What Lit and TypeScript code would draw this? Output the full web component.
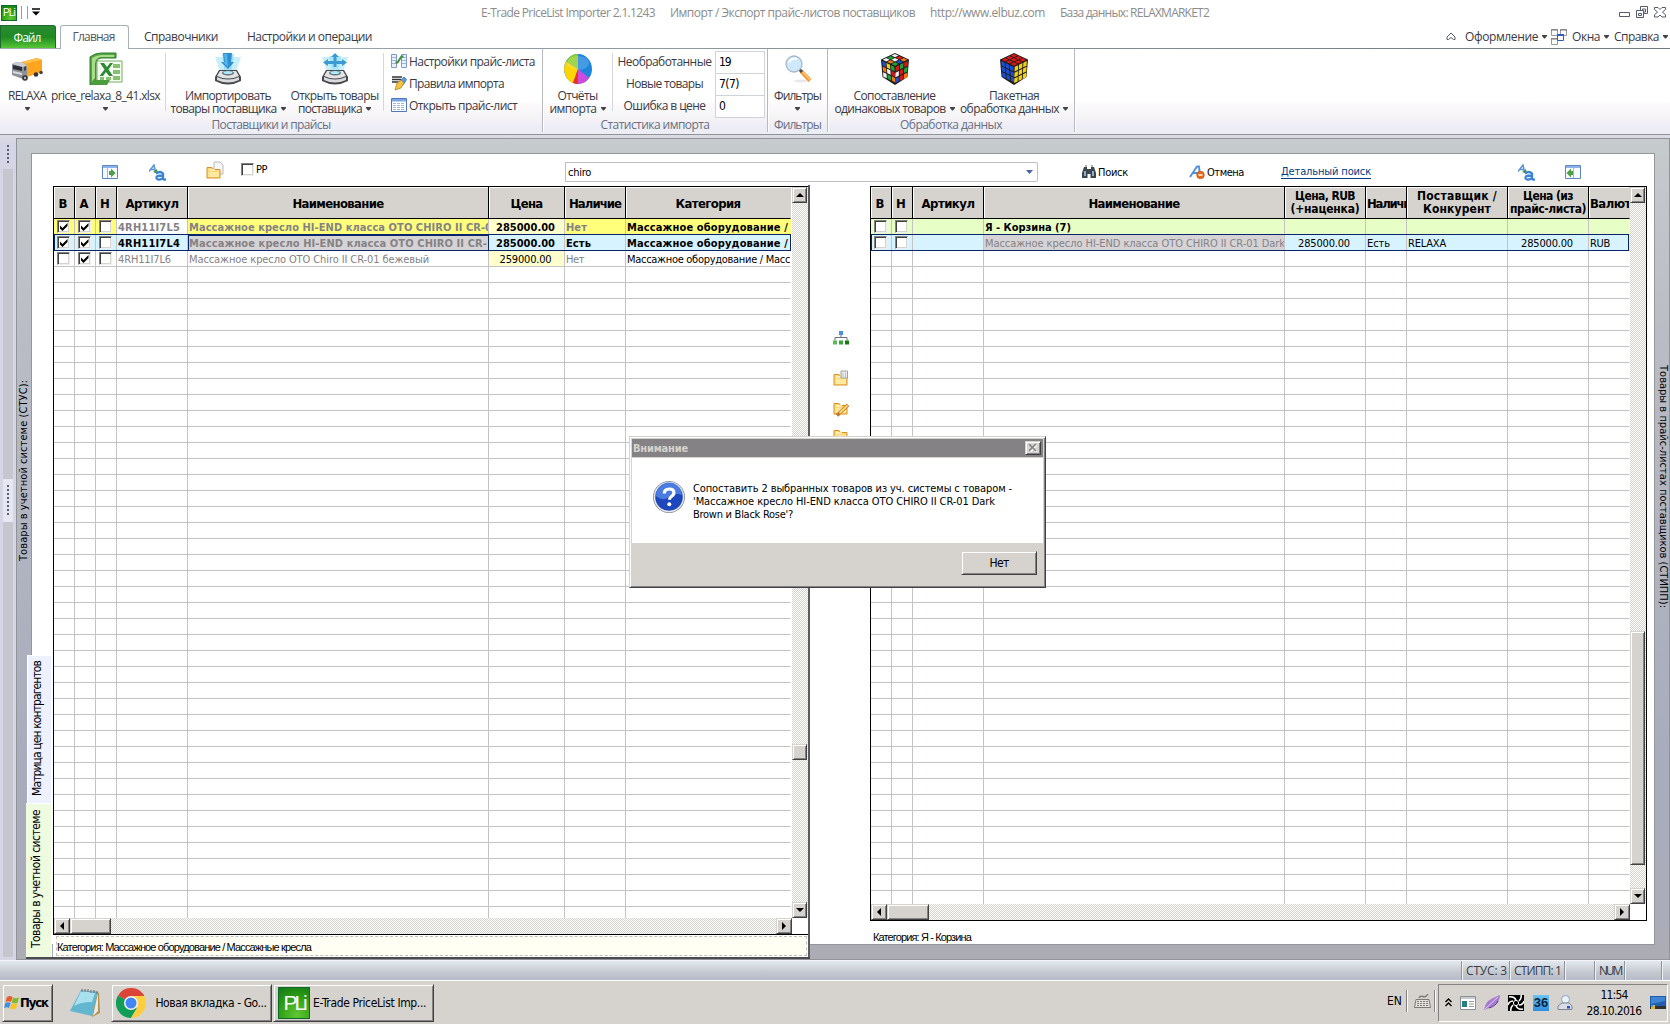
import { LitElement, css, html, svg, nothing } from "lit";
import { customElement, property } from "lit/decorators.js";
import { classMap } from "lit/directives/class-map.js";
import { styleMap } from "lit/directives/style-map.js";

/* A label with a fixed run length, the letter spacing takes up the difference. */
@customElement("fit-text")
export class FitText extends LitElement {
    @property() text = "";
    @property({ type: Number }) w = 0;

    static styles = css`
        :host {
            display: inline-block;
            white-space: pre;
        }
        span {
            display: inline-block;
        }
    `;

    updated() {
        const span = this.shadowRoot!.querySelector("span")!;
        span.style.letterSpacing = "0";
        if (!this.w) return;
        const box = span.getBoundingClientRect();
        const length = Math.max(box.width, box.height);
        span.style.letterSpacing = (this.w - length) / this.text.length + "px";
    }

    render() {
        return html`<span>${this.text}</span>`;
    }
}

const t = (text: string, w = 0, cls = "") => html`<fit-text class=${cls} text=${text} w=${w}></fit-text>`;

const icon = (w: number, h: number, body: unknown, box = `0 0 ${w} ${h}`) =>
    html`<svg class="icon" width=${w} height=${h} viewBox=${box}>${body}</svg>`;

const folder = svg`
    <path d="M1 4.500h5l1.500 2H14v8.500H1z" fill="#fbd978" stroke="#d9902a"/>
    <path d="M2.500 9h10.500v5H2.500z" fill="#ffe9a0"/><path d="M3 7h6" stroke="#fff3c4" stroke-width="1.500"/>`;

const icons = {
    truck: icon(32, 28, svg`
        <path d="M11 7 26 3l5 2v12l-16 5-4-2z" fill="#f08a00"/>
        <path d="M11 7 26 3l5 2-16 4z" fill="#ffc04a"/><path d="M15 9 31 5v12l-16 5z" fill="#ffa51f"/>
        <path d="M1 9l4-2 8 1 3 3v11l-4 2-11-4z" fill="#8d9097"/>
        <path d="M2 10l9 2v4l-9-2z" fill="#2b3038"/><path d="M1 9l4-2 8 1 3 3-4 1z" fill="#c9cdd4"/>
        <path d="M2 16l9 2v2l-9-2z" fill="#d9dce0"/><path d="M13 12l2-1v4l-2 1z" fill="#39424f"/>
        <circle cx="14" cy="23" r="2.800" fill="#333"/><circle cx="14" cy="23" r="1.200" fill="#bbb"/>
        <circle cx="25" cy="19.500" r="2.300" fill="#333"/><circle cx="30" cy="17.500" r="1.800" fill="#444"/>`),
    excel: icon(34, 34, svg`
        <path d="M1 5 Q6 1 12 1H27V6H12Q7 7 7 12V28L1 33z" fill="#58a546" stroke="#2f7a2d"/>
        <path d="M3 6Q8 3 13 3h12v2H12Q6 6 6 12v14l-3 3z" fill="#a9dc86"/>
        <path d="M8 9h25v21H8z" fill="#f6fbf4" stroke="#73b05f"/>
        <path d="M24 12h7v4h-7zM24 18h7v4h-7zM24 24h7v4h-7zM17 25h5v3h-5zM11 25h4v3h-4z" fill="#86c26e"/>
        <path d="M11 11h4l3 4 3-4h3l-4.500 6.500L24 24h-4l-3-4-3 4h-3.500l5-6.500z" fill="#2e8b35"/>
        <path d="M1 33l6-5h14l-3 5z" fill="#4b9c3d"/>`),
    scanDown: icon(28, 34, svg`
        <path d="M1 5 27 5 21 22H7z" fill="#c7eefa"/><path d="M8 2h12l-3 20h-6z" fill="#8fd6f2" opacity=".7"/>
        <path d="M9 1h9l-1 9h3l-6 7-7-7h3z" fill="#2b8fd0"/><path d="M10 2h3l1 13-5-5h2z" fill="#57b4e6"/>
        <path d="M5 18h18l4 7v4q-13 7-26 0v-4z" fill="#45484c"/>
        <path d="M6 19h16l3 5q-11 5-22 0z" fill="#e1e3e5"/><ellipse cx="14" cy="21" rx="6" ry="2.500" fill="#6d7276"/>
        <ellipse cx="14" cy="20.500" rx="4.500" ry="1.500" fill="#a8ecff"/><path d="M3 25q11 5 22 0v3q-11 5-22 0z" fill="#d9dbdd"/>`),
    scanUp: icon(28, 34, svg`
        <path d="M1 5 27 5 21 22H7z" fill="#c7eefa"/><path d="M8 4h12l-3 18h-6z" fill="#a5e0f5" opacity=".8"/>
        <path d="M14 1l4 4h-2.500v4H21V7l5 3.500-5 3.500v-2h-5.500v3h-3v-3H7v2l-5-3.500L7 7v2h5.500V5H10z" fill="#3c9bd3"/>
        <path d="M5 18h18l4 7v4q-13 7-26 0v-4z" fill="#45484c"/>
        <path d="M6 19h16l3 5q-11 5-22 0z" fill="#e1e3e5"/><ellipse cx="14" cy="21" rx="6" ry="2.500" fill="#6d7276"/>
        <ellipse cx="14" cy="20.500" rx="4.500" ry="1.500" fill="#a8ecff"/><path d="M3 25q11 5 22 0v3q-11 5-22 0z" fill="#d9dbdd"/>`),
    listSetup: icon(16, 16, svg`
        <path d="M.5 1.500h5v13h-5zM10.500 1.500h5v13h-5z" fill="#eaf1fb" stroke="#7d9ccb"/>
        <path d="M1 4.500h4M1 7.500h4M1 10.500h4M11 4.500h4M11 7.500h4M11 10.500h4" stroke="#9bb5dc"/>
        <path d="M4.500 9.500h2l4-6h2" fill="none" stroke="#3f8f3a" stroke-width="2"/>`),
    rules: icon(16, 16, svg`
        <path d="M1 2h10M1 4.500h9M1 7h8" stroke="#333" stroke-width="1.300"/>
        <path d="M10 5l3-3 2.500 2.500-3 5z" fill="#5b9be0" stroke="#3568ad" stroke-width=".8"/>
        <path d="M6 8l4-3 3 3-3 5-6 2z" fill="#f5c344" stroke="#b98513" stroke-width=".8"/>`),
    sheet: icon(16, 16, svg`
        <path d="M.5 1.500h15v13H.5z" fill="#fff" stroke="#4c79bd"/><path d="M1 2h14v2.500H1z" fill="#7da6e0"/>
        <path d="M2 6.500h12M2 8.500h12M2 10.500h12M2 12.500h12" stroke="#9fb9dd" stroke-dasharray="3 1"/>`),
    pie: icon(30, 32, svg`
        <ellipse cx="15" cy="16" rx="14" ry="15" fill="#1e84dd"/>
        <path d="M15 16V1A14 15 0 0 0 3 8.500z" fill="#8ccc28"/>
        <path d="M15 16 3 8.500A14 15 0 0 0 10 30z" fill="#ffd400"/><path d="M15 16 10 30a14 15 0 0 0 6 1z" fill="#f03018"/>
        <path d="M15 16v15A14 15 0 0 0 26 25z" fill="#ce4be0"/>
        <ellipse cx="15" cy="10" rx="11" ry="7" fill="#fff" opacity=".18"/>`),
    lens: icon(28, 30, svg`
        <ellipse cx="17" cy="27" rx="7" ry="1.500" fill="#e8e8ea"/>
        <path d="M17 17l9 9.500" stroke="#f29b35" stroke-width="4"/><path d="M17 16l9 9.500" stroke="#ffd08a" stroke-width="1.300"/>
        <path d="M15 15l3 3" stroke="#4a4a50" stroke-width="3"/>
        <circle cx="10" cy="10" r="8" fill="#cfe9fa" stroke="#a7b9cb" stroke-width="1.300"/>
        <path d="M5 9a6 6 0 0 1 8-4" fill="none" stroke="#fff" stroke-width="2"/>`),
    pane: icon(16, 14, svg`
        <path d="M.5.5h15v13H.5z" fill="#f7fafe" stroke="#5c86c4"/><path d="M1 1h14v2H1z" fill="#8fb3e8"/>
        <path d="M5.500 3v10" stroke="#9bb5dc"/><path d="M7 6h2V3.500l4.500 4.500L9 12.500V10H7z" fill="#4aa043"/>`),
    paneLeft: icon(16, 14, svg`
        <path d="M.5.5h15v13H.5z" fill="#f7fafe" stroke="#5c86c4"/><path d="M1 1h14v2H1z" fill="#8fb3e8"/>
        <path d="M8.500 3v10" stroke="#9bb5dc"/><path d="M8 6H6V3.500L1.500 8 6 12.500V10h2z" fill="#4aa043"/>`),
    letters: icon(17, 17, svg`
        <path d="M0 7.500 5 1 6.500 8M2 5.500h4" fill="none" stroke="#5a93d8" stroke-width="1.500"/>
        <path d="M4 8l4-3 1 5z" fill="#3f9a3a"/>
        <path d="M7 9.500q4-3 7 0V14q0 2 3 1.500M13 11.500q-6 0-5.500 2.500 1 3 6 .5" fill="none" stroke="#3a82d6" stroke-width="2.300"/>`),
    folderPage: icon(18, 18, svg`<path d="M8 1h6l3 3v9H8z" fill="#f6f6f6" stroke="#b9b9b9"/><g transform="translate(0 2)">${folder}</g>`),
    binoculars: icon(14, 14, svg`
        <path d="M2 2h3v2h4V2h3l2 6v5H8.500V9h-3v4H0V8z" fill="#3c4652"/><path d="M2 6h2v5H2zM10 6h2v5h-2z" fill="#93a9bd"/>
        <path d="M3 1h2M9 1h2" stroke="#55606c"/>`),
    cancel: icon(16, 14, svg`
        <path d="M1 12 8 1.500h2L11 12M4 8h6" fill="none" stroke="#5592dc" stroke-width="2"/>
        <circle cx="11.500" cy="10" r="3.800" fill="#ea6a1a" stroke="#b8480b" stroke-width=".6"/><path d="M9.500 10h4" stroke="#fff" stroke-width="1.400"/>`),
    tree: icon(16, 14, svg`
        <path d="M8 4v3M2 9.500V6.500h12v3" fill="none" stroke="#6d7278"/><path d="M6 0h4v4H6z" fill="#4f8fe6"/>
        <path d="M0 9.500h4v4H0z" fill="#5cb85a"/><path d="M6 9.500h4v4H6z" fill="#3fa33d"/><path d="M12 9.500h4v4h-4z" fill="#17781a"/>`),
    folderBin: icon(16, 16, svg`${folder}<path d="M8 1h6.500v7H8z" fill="#f1f1f1" stroke="#a0a0a0"/><path d="M10 2.500v5M12.500 2.500v5" stroke="#bbb"/>`),
    folderEdit: icon(16, 16, svg`<g transform="translate(0 -2)">${folder}</g><path d="M15 4 6 12.500l-2 2" stroke="#c5792a" stroke-width="3.600"/><path d="M14.500 4.500 6.500 12" stroke="#ffd773" stroke-width="2"/>`),
    folder: icon(16, 16, folder),
    question: icon(34, 34, svg`
        <circle cx="17" cy="17" r="16" fill="#8a8d94"/><circle cx="17" cy="17" r="15.200" fill="#e6e8ee"/>
        <circle cx="17" cy="17" r="13.800" fill="#1d48bd"/><path d="M4 16a13 13 0 0 1 26-1q-6-3-13 2t-13-1z" fill="#4a7be0"/>
        <path d="M12.300 13.500q0-4.500 5-4.500 4.600 0 4.600 3.800 0 2.200-2.500 3.700-2 1.300-2 3.300" fill="none" stroke="#fff" stroke-width="3.200"/>
        <circle cx="17.300" cy="24.300" r="2" fill="#fff"/>`),
    flag: icon(16, 15, svg`
        <path d="M3 2q3-2 5.500 0L7 7Q4.500 5.500 1.500 7z" fill="#ea5b28"/><path d="M9 2.500q3 1.500 6 0L13.500 8Q11 9 7.800 7.500z" fill="#7fba2c"/>
        <path d="M1.300 8q3-1.500 5.400 0L5 13Q3 11.500 0 13z" fill="#3f8fe0"/><path d="M7.500 8.500q3 1.500 5.800.3L12 13.500q-3 1.500-6 0z" fill="#fbc31c"/>`),
    notepad: icon(32, 30, svg`
        <path d="M25 3 30 5l1 20-8 4z" fill="#b98f4a"/><path d="M12 2l17 2-6 24L1 23z" fill="#62b6d0"/>
        <path d="M12 3l14 2-3 9Q12 14 5 18z" fill="#a9e0ee"/><path d="M13 1v3M16 1v3M19 1v3M22 2v3M25 2v3M28 3v3" stroke="#666"/>
        <path d="M29 5l0 18-5 5z" fill="#e5ecee"/>`),
    chrome: icon(30, 30, svg`
        <path d="M15 15 2 7.500A15 15 0 0 1 28 7.500z" fill="#db4437"/><path d="M15 15 2 7.500A15 15 0 0 0 15 30l6-10z" fill="#0f9d58"/>
        <path d="M15 15l6 5-6 10A15 15 0 0 0 28 7.500H15z" fill="#ffcd40"/><path d="M15 8h13.200L27 5.500 15 5z" fill="#db4437"/>
        <circle cx="15" cy="15" r="7" fill="#f4f4f4"/><circle cx="15" cy="15" r="5.500" fill="#4285f4"/>`),
    keyboard: icon(17, 16, svg`
        <path d="M2 6.500h13l1.500 8H.5z" fill="#e4e2de" stroke="#7c7974"/><path d="M3 8.500h11M3 10.500h11M3 12.500h11" stroke="#7c7974" stroke-dasharray="2 1"/>
        <path d="M5 5Q6 2.500 9 3.500T14 1" fill="none" stroke="#7c7974" stroke-width="1.400"/>`),
    trayWindow: icon(16, 14, svg`<path d="M.5.5h15v13H.5z" fill="#fff" stroke="#8b9097"/><path d="M1 1h14v2H1z" fill="#c4ccd4"/><path d="M2 5h5v6H2z" fill="#268080"/><path d="M9 5.500h5M9 8h5M9 10.500h5" stroke="#999"/>`),
    feather: icon(16, 16, svg`<path d="M0 15Q1 7 8 3.500 13 1 16 0q0 7-6 10.500Q6 13 0 15z" fill="#a57ad0"/><path d="M1 14 14 2" stroke="#e6d3f5"/><path d="M5 13q7-2 9-7" stroke="#5f3790" fill="none"/>`),
    swirl: icon(16, 16, svg`<path d="M0 0h16v16H0z" fill="#000"/><path d="M8 5Q6 1 1 2M11 6q3-3 2-6M11 10q4 0 5-4M8 11q2 4 7 3M5 10q-3 3-2 6M5 6Q1 6 0 10" fill="none" stroke="#fff" stroke-width="1.600"/><circle cx="8" cy="8" r="2.600" fill="none" stroke="#fff"/>`),
    userTray: icon(16, 16, svg`<circle cx="8.500" cy="4.500" r="4" fill="#eaf3fb" stroke="#8aa3ba"/><path d="M1 11l4-3h7l3 3v3.500H1z" fill="#d9dde3" stroke="#7f8892"/><path d="M10 11h3v2.500h-3z" fill="#2a50d8"/>`),
    desktop: icon(16, 14, svg`<path d="M0 0h16v10H0z" fill="#1f5fae"/><path d="M1 1h14v4L1 8z" fill="#3e86d4"/><path d="M0 10h16v3H0z" fill="#333"/><path d="M1 9h4v4H1z" fill="#e8b32c"/><path d="M1 9h2v2H1z" fill="#3aa0e8"/>`),
    windows: icon(16, 16, svg`<path d="M.5.5h6v6h-6zM9.500.5h6v6h-6zM.5 9.500h6v6h-6z" fill="#fff" stroke="#999"/><path d="M0 1h7M9 1h7M0 10h7" stroke="#777"/><path d="M6.500 5.500h6v6h-6z" fill="#fff" stroke="#2c5fc0"/><path d="M6 6h7" stroke="#2c5fc0" stroke-width="2"/>`),
    up: icon(12, 9, svg`<path d="M2 7.500V5l4-4 4 4v2.500H8.500L6 5.500 3.500 7.500z" fill="#fff" stroke="#555c66"/>`),
    winMin: icon(12, 12, svg`<path d="M.5 6.500h10v4H.5z" fill="#fff" stroke="#555c70"/>`),
    winMax: icon(13, 12, svg`<path d="M4.500.5h7v7h-7z" fill="#fff" stroke="#555c70"/><path d="M6.500 3h3v3h-3z" fill="none" stroke="#555c70"/><path d="M.5 4.500h7v7h-7z" fill="#fff" stroke="#555c70"/><path d="M2.500 7.500h3v2h-3z" fill="none" stroke="#555c70"/>`),
    winClose: icon(13, 11, svg`<path d="M.5.5h3.500l2 2 2-2h3.500v2l-3 2.500 3 3v2H8l-2-2-2 2H.5v-2l3-3-3-2.500z" fill="#fff" stroke="#555c70"/>`),
    check: icon(9, 9, svg`<path d="M1 3.500v3L3.500 9 8.500 4V1L3.500 6z" fill="#000"/>`),
};

const cubeColours: Record<string, string> = { r: "#d81818", g: "#22a03a", b: "#1b4fd0", y: "#f0d018", w: "#f2f2f2", o: "#f07818" };

/* Isometric 3x3 cube, the faces come as nine letters each. */
function cube(top: string, left: string, right: string) {
    const face = (cells: string, ox: number, oy: number, ux: number, uy: number, vx: number, vy: number) =>
        [...cells].map((c, i) => {
            const a = (i % 3) + 0.1;
            const b = Math.floor(i / 3) + 0.1;
            const p = (m: number, n: number) => `${(ox + m * ux + n * vx).toFixed(2)},${(oy + m * uy + n * vy).toFixed(2)}`;
            return svg`<polygon points="${p(a, b)} ${p(a + 0.8, b)} ${p(a + 0.8, b + 0.8)} ${p(a, b + 0.8)}" fill=${cubeColours[c]} />`;
        });
    return icon(28, 32, svg`
        <path d="M14 0 28 6.500 26.500 24 14 32 1.500 24 0 6.500z" fill="#1c1c1c"/>
        ${face(top, 14, 0.5, 4.4, 2.1, -4.4, 2.1)}
        ${face(left, 0.8, 7.2, 4.3, 2.1, 0.4, 5.6)}
        ${face(right, 14.3, 13.5, 4.3, -2.1, -0.2, 5.8)}`);
}

const arrow = html`<svg class="icon" width="5" height="4" viewBox="0 0 5 4"><path d="M0 0h5v1L3 3.500H2L0 1z" fill="#444" /></svg>`;

const gridStyles = css`
    .raised {
        box-sizing: border-box;
        background: #d6d3ce;
        border: 1px solid;
        border-color: #d6d3ce #424142 #424142 #d6d3ce;
        box-shadow: inset 1px 1px #fff, inset -1px -1px #848284;
    }
    .box {
        box-sizing: border-box;
        width: 13px;
        height: 13px;
        background: #fff;
        border: 1px solid;
        border-color: #848284 #efefef #efefef #848284;
        box-shadow: inset 1px 1px #424142, inset -1px -1px #d6d3ce;
        display: flex;
        align-items: center;
        justify-content: center;
        flex: none;
    }
    .icon {
        display: block;
        flex: none;
    }
`;

type Cell = { text?: string; w?: number; check?: boolean; bg?: string; grey?: boolean; bold?: boolean; centre?: boolean; active?: boolean };
type Row = { selected?: boolean; cells: Cell[] };
type Column = { width: number; lines: [string, number][]; left?: boolean };

@customElement("price-grid")
export class PriceGrid extends LitElement {
    @property({ attribute: false }) columns: Column[] = [];
    @property({ attribute: false }) rows: Row[] = [];
    @property({ type: Number }) total = 44;
    @property({ type: Number }) thumb = 0;
    @property({ type: Number }) thumbSize = 16;
    @property({ type: Number }) hThumb = 40;

    static styles = [
        gridStyles,
        css`
            :host {
                display: grid;
                grid-template-columns: auto 16px;
                grid-template-rows: minmax(0, 1fr) 16px;
                border: 1px solid #000;
                border-right: none;
                box-sizing: border-box;
                background: #fff;
                font: 11px "DejaVu Sans Condensed", "DejaVu Sans", sans-serif;
                color: #000;
            }
            .table {
                overflow: hidden;
            }
            .row {
                display: grid;
                height: 16px;
                position: relative;
            }
            .row.head {
                height: 32px;
            }
            .th {
                box-sizing: border-box;
                background: #d6d3ce;
                border-right: 1px solid #000;
                border-bottom: 1px solid #000;
                box-shadow: inset 1px 1px #fff;
                font-weight: bold;
                font-size: 13px;
                line-height: 13px;
                display: flex;
                flex-direction: column;
                align-items: center;
                justify-content: center;
                overflow: hidden;
                padding-top: 1px;
            }
            .th.mark {
                padding-right: 2px;
            }
            .th.left {
                align-items: flex-start;
                padding-left: 1px;
            }
            .th.small {
                font-size: 12px;
            }
            .td {
                box-sizing: border-box;
                border-right: 1px solid #c6c3c6;
                border-bottom: 1px solid #c6c3c6;
                padding: 1px 0 0 1px;
                line-height: 15px;
                height: 16px;
                overflow: hidden;
                white-space: nowrap;
            }
            .th:last-child,
            .td:last-child {
                border-right-color: transparent;
            }
            .td.centre {
                text-align: center;
                padding: 1px 2px 0 0;
            }
            .td.grey {
                color: #848284;
            }
            .td.bold {
                font-weight: bold;
            }
            .td.mark {
                padding: 1px 0 0 3px;
            }
            .yellow {
                background: #ffff7b;
            }
            .cream {
                background: #ffffce;
            }
            .blue {
                background: #d6f3ff;
            }
            .green {
                background: #e7ffc6;
            }
            .silver {
                background: #d6d3d6;
            }
            .td.active {
                outline: 1px solid #08246b;
                outline-offset: -1px;
            }
            .selected::after {
                content: "";
                position: absolute;
                inset: -1px 1px 0 0;
                border: 1px solid #08246b;
            }
            .bar {
                background: repeating-conic-gradient(#fff 0 25%, #d6d3ce 0 50%) 0 0 / 2px 2px;
                display: flex;
            }
            .raised {
                width: 16px;
                height: 16px;
                display: flex;
                align-items: center;
                justify-content: center;
                flex: none;
            }
            .bar.v {
                flex-direction: column;
            }
            .bar.v .raised {
                width: 15px;
            }
            .fill {
                flex: 1;
            }
        `,
    ];

    button(path: string) {
        return html`<div class="raised"><svg width="8" height="8" viewBox="0 0 8 8"><path d=${path} fill="#000" /></svg></div>`;
    }

    cell(cell: Cell) {
        const mark = cell.check !== undefined;
        const classes = { td: true, mark, grey: !!cell.grey, bold: !!cell.bold, centre: !!cell.centre, active: !!cell.active, [cell.bg || "none"]: true };
        return html`<div class=${classMap(classes)}>
            ${mark ? html`<div class="box">${cell.check ? icons.check : nothing}</div>` : nothing}${cell.text ? t(cell.text, cell.w) : nothing}
        </div>`;
    }

    render() {
        const tracks = styleMap({ gridTemplateColumns: this.columns.map((c) => c.width + "px").join(" ") });
        const empty = Array.from({ length: this.total - this.rows.length });
        return html`
            <div class="table">
                <div class="row head" style=${tracks}>
                    ${this.columns.map(
                        (c) =>
                            html`<div class=${classMap({ th: true, left: !!c.left, small: c.lines.length > 1, mark: c.width === 21 })}>
                                ${c.lines.map(([text, w]) => t(text, w))}
                            </div>`
                    )}
                </div>
                ${this.rows.map((r) => html`<div class=${classMap({ row: true, selected: !!r.selected })} style=${tracks}>${r.cells.map((c) => this.cell(c))}</div>`)}
                ${empty.map(() => html`<div class="row" style=${tracks}>${this.columns.map(() => html`<div class="td"></div>`)}</div>`)}
            </div>
            <div class="bar v">
                ${this.button("M0 6h8L4 2z")}
                <div style=${styleMap({ height: this.thumb + "px" })}></div>
                <div class="raised" style=${styleMap({ height: this.thumbSize + "px" })}></div>
                <div class="fill"></div>
                ${this.button("M0 2h8L4 6z")}
            </div>
            <div class="bar">
                ${this.button("M6 0v8L2 4z")}
                <div class="raised" style=${styleMap({ width: this.hThumb + "px" })}></div>
                <div class="fill"></div>
                ${this.button("M2 0v8l4-4z")}
            </div>
        `;
    }
}

const box = (check: boolean, bg = ""): Cell => ({ check, bg });

const ownColumns: Column[] = [
    { width: 21, lines: [["В", 0]] },
    { width: 21, lines: [["А", 0]] },
    { width: 21, lines: [["Н", 0]] },
    { width: 71, lines: [["Артикул", 53]] },
    { width: 301, lines: [["Наименование", 91]] },
    { width: 76, lines: [["Цена", 32]] },
    { width: 61, lines: [["Наличие", 52]] },
    { width: 165, lines: [["Категория", 65]] },
];

const ownRows: Row[] = [
    {
        cells: [
            box(true, "yellow"),
            box(true, "yellow"),
            box(false, "yellow"),
            { text: "4RH11I7L5", w: 62, grey: true, bold: true },
            { text: "Массажное кресло HI-END класса OTO CHIRO II CR-01", w: 310, bg: "yellow", grey: true, bold: true },
            { text: "285000.00", w: 59, bg: "cream", bold: true, centre: true },
            { text: "Нет", w: 21, bg: "yellow", grey: true, bold: true },
            { text: "Массажное оборудование / Массажные", w: 233, bg: "yellow", bold: true },
        ],
    },
    {
        selected: true,
        cells: [
            box(true, "blue"),
            box(true, "blue"),
            box(false, "blue"),
            { text: "4RH11I7L4", w: 62, bg: "blue", bold: true },
            { text: "Массажное кресло HI-END класса OTO CHIRO II CR-", w: 298, bg: "silver", grey: true, bold: true, active: true },
            { text: "285000.00", w: 59, bg: "blue", bold: true, centre: true },
            { text: "Есть", w: 25, bg: "blue", bold: true },
            { text: "Массажное оборудование / Массажные", w: 233, bg: "blue", bold: true },
        ],
    },
    {
        cells: [
            box(false),
            box(true),
            box(false),
            { text: "4RH11I7L6", w: 53, grey: true },
            { text: "Массажное кресло OTO Chiro II CR-01 бежевый", w: 240, grey: true },
            { text: "259000.00", w: 52, bg: "cream", centre: true },
            { text: "Нет", w: 18, grey: true },
            { text: "Массажное оборудование / Массажные", w: 197 },
        ],
    },
];

const supplierColumns: Column[] = [
    { width: 21, lines: [["В", 0]] },
    { width: 21, lines: [["Н", 0]] },
    { width: 71, lines: [["Артикул", 53]] },
    { width: 301, lines: [["Наименование", 91]] },
    { width: 81, lines: [["Цена, RUB", 60], ["(+наценка)", 69]] },
    { width: 41, lines: [["Наличие", 50]], left: true },
    { width: 101, lines: [["Поставщик /", 80], ["Конкурент", 68]] },
    { width: 81, lines: [["Цена (из", 50], ["прайс-листа)", 76]] },
    { width: 41, lines: [["Валюта", 48]], left: true },
];

const supplierRows: Row[] = [
    {
        cells: [
            box(false, "green"),
            box(false, "green"),
            { bg: "green" },
            { text: "Я - Корзина (7)", w: 86, bg: "green", bold: true },
            ...Array.from({ length: 5 }, () => ({ bg: "green" })),
        ],
    },
    {
        selected: true,
        cells: [
            box(false, "blue"),
            box(false, "blue"),
            { bg: "blue" },
            { text: "Массажное кресло HI-END класса OTO CHIRO II CR-01 Dark", w: 300, bg: "silver", grey: true },
            { text: "285000.00", w: 52, bg: "blue", centre: true },
            { text: "Есть", w: 23, bg: "blue" },
            { text: "RELAXA", w: 38, bg: "blue" },
            { text: "285000.00", w: 52, bg: "blue", centre: true },
            { text: "RUB", w: 20, bg: "blue" },
        ],
    },
];

@customElement("app-root")
export class AppRoot extends LitElement {
    static styles = [
        gridStyles,
        css`
            :host {
                display: flex;
                flex-direction: column;
                width: 1670px;
                height: 1024px;
                overflow: hidden;
                position: relative;
                background: #fff;
                font: 12px "Open Sans", "Noto Sans", sans-serif;
                color: #3a3a44;
            }
            .tahoma {
                font: 11px "DejaVu Sans Condensed", "DejaVu Sans", sans-serif;
                color: #000;
            }
            .title {
                height: 25px;
                display: flex;
                align-items: center;
                color: #8c8c8c;
                padding: 0 3px 1px 1px;
                box-sizing: border-box;
            }
            .logo {
                background: radial-gradient(circle at 60% 90%, #5fc832, #2b9a12 60%, #11771c);
                border: 1px solid #0c6a2a;
                box-sizing: border-box;
                color: #fff;
                width: 16px;
                height: 16px;
                margin-top: 1px;
                display: flex;
                align-items: center;
                justify-content: center;
                font: 10px "Liberation Sans", sans-serif;
            }
            .logo.big {
                width: 32px;
                height: 32px;
                margin-top: 0;
                font-size: 21px;
            }
            .quick {
                width: 5px;
                height: 13px;
                margin: 0 4px 0 4px;
                border: solid #9a9a9a;
                border-width: 0 1px;
            }
            .title .caption {
                margin-left: 441px;
                display: flex;
                gap: 15px;
                flex: 1;
            }
            .controls {
                display: flex;
                gap: 5px;
                align-items: center;
            }
            .tabs {
                height: 24px;
                display: flex;
                align-items: center;
                box-sizing: border-box;
                padding-bottom: 1px;
                background: linear-gradient(90deg, #a4acb4, #6d7c80) 0 100% / 100% 1px no-repeat;
            }
            .file {
                width: 56px;
                height: 23px;
                box-sizing: border-box;
                color: #fff;
                background: linear-gradient(#2b8a33, #1e8a22 50%, #56c637);
                border: 1px solid #1c6b2c;
                border-bottom: none;
                border-radius: 0 3px 0 0;
                display: flex;
                align-items: center;
                justify-content: center;
                padding-right: 2px;
            }
            .tab {
                width: 69px;
                height: 24px;
                margin: 1px 15px 0 4px;
                background: #fff;
                border: 1px solid #a8b0b8;
                border-bottom: none;
                border-radius: 3px 3px 0 0;
                box-sizing: border-box;
                display: flex;
                align-items: center;
                justify-content: center;
                color: #54545f;
                padding: 0 2px 2px 0;
            }
            .menu {
                margin-left: auto;
                display: flex;
                align-items: center;
                padding-right: 2px;
            }
            .menu .icon {
                margin-left: 4px;
            }
            .gap-wide {
                width: 29px;
            }
            .gap-menu {
                width: 5px;
            }
            .ribbon {
                height: 85px;
                display: flex;
                background: linear-gradient(#fff 52px, #fcf9fd 56px, #f6f6f7 64px, #f5f1f6 72px, #ecedf6 78px, #eeedf4);
                border-bottom: 1px solid #8f9499;
            }
            .group {
                display: flex;
                flex-direction: column;
                box-sizing: border-box;
                border-right: 1px solid #b4b9c2;
                margin-bottom: 2px;
                box-shadow: 1px 0 #fff;
            }
            .group .items {
                height: 67px;
                display: flex;
                flex: none;
            }
            .group .name {
                height: 15px;
                line-height: 17px;
                text-align: center;
                color: #6a7080;
            }
            .pad {
                width: 4px;
            }
            .big-button {
                display: flex;
                flex-direction: column;
                align-items: center;
            }
            .art {
                height: 40px;
                display: flex;
                align-items: center;
                justify-content: center;
            }
            .line {
                height: 13px;
                line-height: 13px;
                display: flex;
                align-items: center;
                gap: 4px;
            }
            .split {
                width: 1px;
                height: 58px;
                margin-top: 4px;
                background: #d4d7de;
            }
            .small-buttons {
                display: grid;
                grid-template-rows: repeat(3, 22px);
                padding: 1px 0 0 7px;
            }
            .small-buttons div {
                display: flex;
                align-items: center;
                gap: 2px;
            }
            .stats {
                display: grid;
                grid-template-columns: 101px 50px;
                grid-template-rows: repeat(3, 22px);
                padding: 1px 0 0 1px;
                align-items: center;
                justify-items: center;
            }
            .stats .value {
                box-sizing: border-box;
                width: 50px;
                height: 23px;
                border: 1px solid #d0d2dc;
                background: #fff;
                padding: 3px 3px;
                font-size: 12px;
                margin-top: 2px;
            }
            .work {
                flex: 1;
                display: flex;
                background: linear-gradient(#dcdce4, #d5d5e6 10px);
                padding-top: 3px;
                min-height: 0;
            }
            .dock {
                width: 10px;
                margin: 31px 3px 3px;
                background: #c6c6cf;
                display: flex;
                flex-direction: column;
                align-items: center;
            }
            .dots {
                width: 10px;
                background: #e6e7f1;
                display: flex;
                justify-content: center;
                align-items: center;
            }
            .dots::before {
                content: "";
                width: 2px;
                height: 100%;
                background: repeating-linear-gradient(#55607c 0 2px, transparent 2px 4px);
            }
            .dots.top {
                height: 19px;
                margin-top: -24px;
                margin-bottom: 5px;
                background: none;
            }
            .dots.mid {
                height: 31px;
                padding: 6px 0;
                margin-top: 310px;
            }
            .desk {
                flex: 1;
                display: flex;
                border: 1px solid #909498;
                background: linear-gradient(#c6cbcd, #c4c7cb 5%, #b9bcc4 25%, #a8acbc 75%, #abacba 95%, #adacb4);
                min-width: 0;
            }
            .side {
                width: 14px;
                writing-mode: vertical-rl;
                line-height: 14px;
                box-sizing: border-box;
            }
            .side.first {
                transform: rotate(180deg);
                padding-bottom: 241px;
                text-align: right;
            }
            .side.last {
                padding-top: 226px;
                line-height: 12px;
            }
            .sheet {
                flex: 1;
                margin: 14px 0;
                border: 1px solid #949698;
                background: #fff;
                display: flex;
                flex-direction: column;
                min-width: 0;
            }
            .toolbar {
                height: 32px;
                padding: 4px 0 0 70px;
                box-sizing: border-box;
                display: grid;
                grid-template-columns: 47px 57px 35px 324px 517px 107px 92px 237px 47px auto;
                align-items: center;
                flex: none;
            }
            .toolbar > * {
                display: flex;
                align-items: center;
                gap: 2px;
            }
            .toolbar > :nth-child(3),
            .toolbar > :nth-child(4) {
                padding-bottom: 5px;
            }
            .combo {
                width: 473px;
                height: 20px;
                box-sizing: border-box;
                border: 1px solid #bdbfc6;
                border-right-color: #a9c3ec;
                border-radius: 0 2px 2px 0;
                justify-content: space-between;
                padding: 0 4px 0 2px;
            }
            .link {
                color: #003d84;
                border-bottom: 1px solid #003d84;
                line-height: 12px;
            }
            .panes {
                flex: 1;
                display: flex;
                min-height: 0;
            }
            .pane {
                display: flex;
                margin: -1px 0 -15px -6px;
                z-index: 1;
                border-bottom: 2px solid #4a4b50;
                flex: none;
            }
            .pane .main {
                width: 755px;
                border-right: 2px solid #5a5b60;
                display: flex;
                flex-direction: column;
                background: #fff;
                padding-top: 1px;
            }
            .pane price-grid {
                height: 749px;
            }
            .category {
                font: 11px "Liberation Sans", sans-serif;
                color: #000;
            }
            .foot {
                margin: 1px 1px 1px 3px;
                flex: 1;
                border: 1px dashed #c0c0c0;
                background: #fffff4;
                display: flex;
                align-items: center;
                padding-top: 1px;
            }
            .side-tabs {
                width: 27px;
                display: flex;
                flex-direction: column;
                justify-content: flex-end;
            }
            .side-tabs div {
                writing-mode: vertical-rl;
                transform: rotate(180deg);
                display: flex;
                align-items: center;
                justify-content: center;
                box-sizing: border-box;
                font-size: 12px;
                padding: 2px 0 0 5px;
            }
            .matrix {
                margin-left: 1px;
                width: 24px;
                height: 148px;
                background: #eef1ff;
                border-right: 1px solid #fff;
                border-bottom: 1px solid #fff;
            }
            .goods {
                width: 26px;
                height: 154px;
                background: #eefbdf;
                border: 1px solid #fff;
                border-width: 0 0 1px 1px;
            }
            .between {
                width: 60px;
                display: flex;
                flex-direction: column;
                align-items: center;
                padding: 145px 0 0 1px;
                box-sizing: border-box;
            }
            .between .icon + .icon {
                margin-top: 25px;
            }
            .between .icon + .icon + .icon {
                margin-top: 15px;
            }
            .between .icon + .icon + .icon + .icon {
                margin-top: 9px;
            }
            .right {
                width: 777px;
            }
            .right price-grid {
                height: 735px;
                border-right: 1px solid #000;
            }
            .right .category {
                margin: 10px 0 0 3px;
            }
            .status {
                height: 21px;
                display: flex;
                justify-content: flex-end;
                background: linear-gradient(#e4e8f0, #c4c9cf 60%, #b9bccb 95%);
                border-top: 1px solid #f2f4f8;
                border-bottom: 1px solid #fff;
                box-sizing: border-box;
            }
            .status div {
                border-left: 1px solid #8f939c;
                box-shadow: inset 1px 0 #f2f2f5;
                box-sizing: border-box;
                padding-left: 4px;
                line-height: 20px;
            }
            .taskbar {
                height: 43px;
                background: #d6d3ce;
                display: flex;
                align-items: center;
                padding: 0 2px;
                box-sizing: border-box;
                font-size: 12px;
            }
            .task {
                height: 38px;
                display: flex;
                align-items: center;
            }
            .start {
                width: 51px;
                padding-left: 1px;
                font-weight: bold;
                font-size: 13px;
            }
            .app {
                width: 161px;
                padding-left: 4px;
                gap: 3px;
                margin-right: 1px;
            }
            .note {
                margin: 0 10px 0 16px;
            }
            .tray {
                width: 230px;
                height: 38px;
                box-sizing: border-box;
                border: 1px solid;
                border-color: #848284 #fff #fff #848284;
                display: flex;
                align-items: center;
                gap: 8px;
                padding-left: 6px;
            }
            .lang {
                margin-left: auto;
                display: flex;
                align-items: center;
                height: 22px;
                margin-bottom: 3px;
                border-right: 1px solid #848284;
                box-shadow: 1px 0 #fff;
                padding-right: 4px;
            }
            .lang + .lang {
                margin: 0 3px 3px 0;
                padding: 0 3px 0 7px;
            }
            .badge {
                width: 16px;
                height: 16px;
                margin-left: 1px;
                background: linear-gradient(#6cc4f0, #2f8fe0);
                font: bold 13px/16px "Liberation Sans", sans-serif;
                text-align: center;
                color: #0b2440;
            }
            .clock {
                width: 56px;
                margin: 0 0 0 5px;
                text-align: center;
                line-height: 16px;
            }
            .dialog {
                position: absolute;
                left: 629px;
                top: 436px;
                width: 417px;
                height: 152px;
                padding: 2px;
                z-index: 2;
                display: flex;
                flex-direction: column;
            }
            .dialog header {
                height: 18px;
                background: #848284;
                color: #d6d3ce;
                font-weight: bold;
                display: flex;
                align-items: center;
                justify-content: space-between;
                padding: 0 2px 0 1px;
            }
            .dialog header .raised {
                width: 16px;
                height: 14px;
                display: flex;
                align-items: center;
                justify-content: center;
            }
            .dialog .body {
                height: 85px;
                margin-top: 1px;
                background: #fff;
                display: flex;
                align-items: center;
                padding: 0 0 8px 20px;
                gap: 7px;
                box-sizing: border-box;
            }
            .dialog .text {
                line-height: 13px;
                display: flex;
                flex-direction: column;
                align-items: flex-start;
                padding-top: 9px;
            }
            .dialog .no {
                width: 76px;
                height: 24px;
                margin: 8px 6px 0 auto;
                display: flex;
                align-items: center;
                justify-content: center;
                font-size: 12px;
            }
        `,
    ];

    bigButton(width: number, art: unknown, lines: [string, number][]) {
        const last = lines.length - 1;
        return html`<div class="big-button" style=${styleMap({ width: width + "px" })}>
            <div class="art">${art}</div>
            ${lines.map(([text, w], i) => html`<div class="line">${text ? t(text, w) : nothing}${i === last ? arrow : nothing}</div>`)}
        </div>`;
    }

    group(width: number, name: string, nameWidth: number, items: unknown) {
        return html`<div class="group" style=${styleMap({ width: width + "px" })}>
            <div class="items">${items}</div>
            <div class="name">${t(name, nameWidth)}</div>
        </div>`;
    }

    renderTitle() {
        return html`<div class="title">
            <div class="logo">${t("PLi", 12)}</div>
            <div class="quick"></div>
            ${icon(8, 8, svg`<path d="M0 1h8" stroke="#000" stroke-width="1.500"/><path d="M0 3.500h8L4 7.500z"/>`)}
            <div class="caption">
                ${t("E-Trade PriceList Importer 2.1.1243", 174)} ${t("Импорт / Экспорт прайс-листов поставщиков", 245)}
                ${t("http://www.elbuz.com", 115)} ${t("База данных: RELAXMARKET2", 149)}
            </div>
            <div class="controls">${icons.winMin}${icons.winMax}${icons.winClose}</div>
        </div>`;
    }

    renderTabs() {
        return html`<div class="tabs">
            <div class="file">${t("Файл", 27)}</div>
            <div class="tab">${t("Главная", 42)}</div>
            ${t("Справочники", 74)}
            <div class="gap-wide"></div>
            ${t("Настройки и операции", 125)}
            <div class="menu">
                ${icons.up}<span class="gap-menu"></span>&nbsp;${t("Оформление", 73)}${arrow}${icons.windows}<span class="gap-menu"></span>
                ${t("Окна", 28)}${arrow}<span class="gap-menu"></span>${t("Справка", 45)}${arrow}
            </div>
        </div>`;
    }

    renderRibbon() {
        return html`<div class="ribbon">
            ${this.group(543, "Поставщики и прайсы", 119, html`
                ${this.bigButton(54, icons.truck, [["RELAXA", 38], ["", 0]])}
                ${this.bigButton(103, icons.excel, [["price_relaxa_8_41.xlsx", 109], ["", 0]])}
                <span class="pad"></span><span class="pad"></span>
                <div class="split"></div>
                ${this.bigButton(124, icons.scanDown, [["Импортировать", 86], ["товары поставщика", 106]])}
                ${this.bigButton(89, icons.scanUp, [["Открыть товары", 88], ["поставщика", 64]])}
                <span class="pad"></span>
                <div class="split"></div>
                <div class="small-buttons">
                    <div>${icons.listSetup}${t("Настройки прайс-листа", 126)}</div>
                    <div>${icons.rules}${t("Правила импорта", 95)}</div>
                    <div>${icons.sheet}${t("Открыть прайс-лист", 108)}</div>
                </div>`)}
            ${this.group(225, "Статистика импорта", 109, html`
                ${this.bigButton(69, icons.pie, [["Отчёты", 40], ["импорта", 47]])}
                <div class="split"></div>
                <div class="stats">
                    ${t("Необработанные", 94)}
                    <div class="value tahoma">${t("19", 12)}</div>
                    ${t("Новые товары", 77)}
                    <div class="value tahoma">${t("7(7)", 20)}</div>
                    ${t("Ошибка в цене", 82)}
                    <div class="value tahoma">${t("0", 0)}</div>
                </div>`)}
            ${this.group(60, "Фильтры", 47, this.bigButton(60, icons.lens, [["Фильтры", 47], ["", 0]]))}
            ${this.group(247, "Обработка данных", 102, html`
                ${this.bigButton(133, cube("wrogwbwog", "bygowrwgo", "rgrwrgbro"), [["Сопоставление", 82], ["одинаковых товаров", 111]])}
                ${this.bigButton(106, cube("rrrrrrrrr", "bbbbbbbbb", "yyyyyyyyy"), [["Пакетная", 50], ["обработка данных", 99]])}`)}
        </div>`;
    }

    renderToolbar() {
        return html`<div class="toolbar tahoma">
            <div>${icons.pane}</div>
            <div>${icons.letters}</div>
            <div>${icons.folderPage}</div>
            <div><span class="box"></span>${t("PP", 12)}</div>
            <div class="combo">
                ${t("chiro", 23)}<svg class="icon" width="7" height="4" viewBox="0 0 7 4"><path d="M0 0h7L3.500 4z" fill="#4a64a8" /></svg>
            </div>
            <div>${icons.binoculars}${t("Поиск", 30)}</div>
            <div>${icons.cancel}${t("Отмена", 37)}</div>
            <div>${t("Детальный поиск", 90, "link")}</div>
            <div>${icons.letters}</div>
            <div>${icons.paneLeft}</div>
        </div>`;
    }

    renderWork() {
        return html`<div class="work">
            <div class="dock">
                <div class="dots top"></div>
                <div class="dots mid"></div>
            </div>
            <div class="desk tahoma">
                <div class="side first">${t("Товары в учетной системе (СТУС):", 181)}</div>
                <div class="sheet">
                    ${this.renderToolbar()}
                    <div class="panes">
                        <div class="pane">
                            <div class="side-tabs">
                                <div class="matrix">${t("Матрица цен контрагентов", 135)}</div>
                                <div class="goods">${t("Товары в учетной системе", 138)}</div>
                            </div>
                            <div class="main">
                                <price-grid .columns=${ownColumns} .rows=${ownRows} total="44" thumb="541" thumbSize="16" hThumb="41"></price-grid>
                                <div class="foot category">${t("Категория: Массажное оборудование / Массажные кресла", 254)}</div>
                            </div>
                        </div>
                        <div class="between">${icons.tree}${icons.folderBin}${icons.folderEdit}${icons.folder}</div>
                        <div class="right">
                            <price-grid .columns=${supplierColumns} .rows=${supplierRows} total="43" thumb="428" thumbSize="234" hThumb="42"></price-grid>
                            <div class="category">${t("Категория: Я - Корзина", 98)}</div>
                        </div>
                    </div>
                </div>
                <div class="side last">${t("Товары в прайс-листах поставщиков (СТИПП):", 243)}</div>
            </div>
        </div>`;
    }

    renderTaskbar() {
        return html`<div class="taskbar tahoma">
            <div class="task start raised">${icons.flag}${t("Пуск", 28)}</div>
            <div class="note">${icons.notepad}</div>
            <div class="task app raised">${icons.chrome}&nbsp;${t("Новая вкладка - Go...", 111)}</div>
            <div class="task app raised"><div class="logo big">${t("PLi", 21)}</div>${t("E-Trade PriceList Imp...", 113)}</div>
            <div class="lang">${t("EN", 15)}</div>
            <div class="lang">${icons.keyboard}</div>
            <div class="tray">
                ${icon(7, 9, svg`<path d="M.5 4 3.500 1l3 3M.5 8l3-3 3 3" fill="none" stroke="#000" stroke-width="1.400"/>`)}
                ${icons.trayWindow}${icons.feather}${icons.swirl}
                <div class="badge">36</div>
                ${icons.userTray}
                <div class="clock">${t("11:54", 27)}${t("28.10.2016", 55)}</div>
                ${icons.desktop}
            </div>
        </div>`;
    }

    renderDialog() {
        return html`<div class="dialog raised tahoma">
            <header>
                ${t("Внимание", 55)}
                <div class="raised">${icon(8, 8, svg`<path d="M1 1l7 7M8 1 1 8" stroke="#fff" stroke-width="1.500"/><path d="M0 0l7 7M7 0 0 7" stroke="#848284" stroke-width="1.600"/>`)}</div>
            </header>
            <div class="body">
                ${icons.question}
                <div class="text">
                    ${t("Сопоставить 2 выбранных товаров из уч. системы с товаром -", 319)}
                    ${t("'Массажное кресло HI-END класса OTO CHIRO II CR-01 Dark", 302)}
                    ${t("Brown и Black Rose'?", 100)}
                </div>
            </div>
            <div class="no raised">${t("Нет", 19)}</div>
        </div>`;
    }

    render() {
        return html`
            ${this.renderTitle()} ${this.renderTabs()} ${this.renderRibbon()} ${this.renderWork()}
            <div class="status">
                <div style="width:48px">${t("СТУС: 3", 41)}</div>
                <div style="width:55px">${t("СТИПП: 1", 47)}</div>
                <div style="width:30px"></div>
                <div style="width:30px">${t("NUM", 22)}</div>
                <div style="width:37px"></div>
                <div style="width:9px"></div>
            </div>
            ${this.renderTaskbar()} ${this.renderDialog()}
        `;
    }
}
